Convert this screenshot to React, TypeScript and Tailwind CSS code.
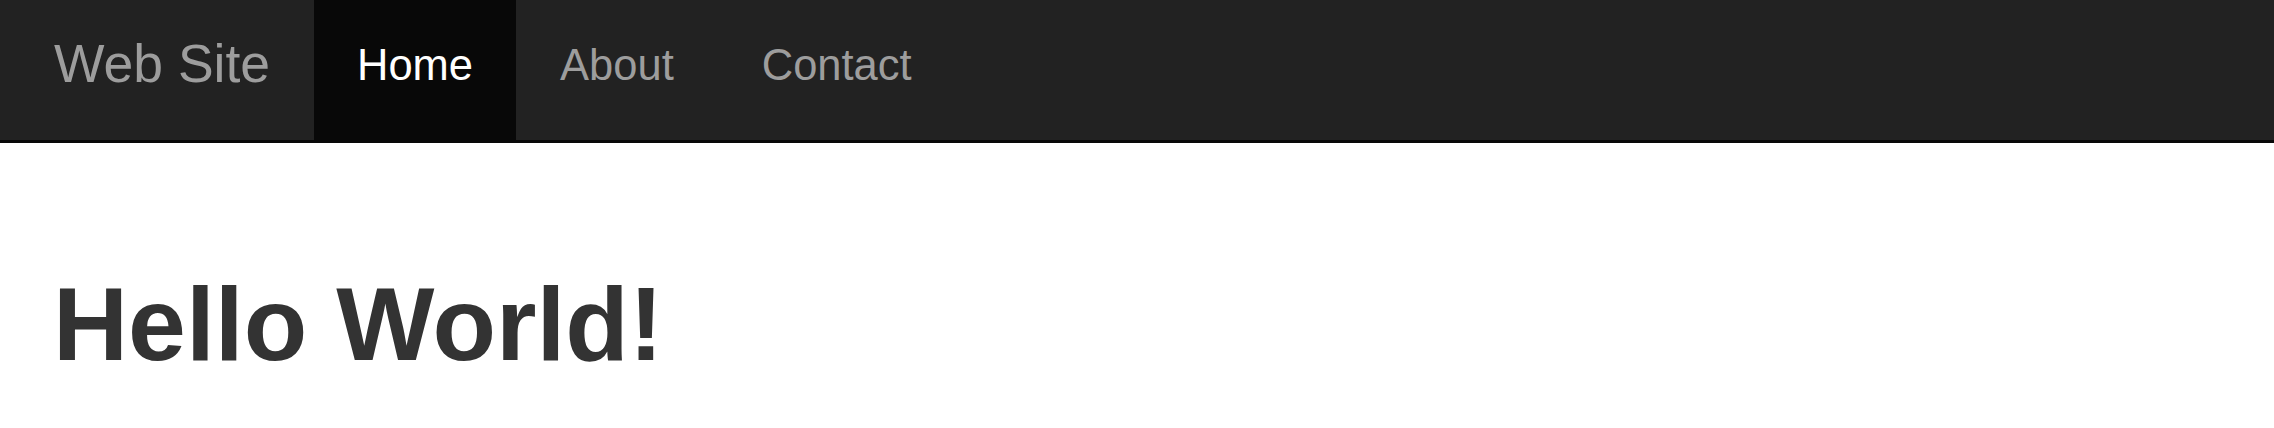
import React from "react";

export default function App() {
  const font = { fontFamily: '"Liberation Sans", Arial, Helvetica, sans-serif' };
  return (
    <div className="min-h-[428px] bg-white" style={font}>
      <nav className="h-[143px] bg-[#222222] border-b-[3px] border-[#080808] flex">
        <a className="w-[314px] h-[140px] pl-[54px] pt-[36px] text-[53.5px] leading-[56px] text-[#9d9d9d] whitespace-nowrap">
          Web Site
        </a>
        <ul className="flex">
          <li>
            <a className="block h-[140px] px-[43px] pt-[37px] text-[43.5px] leading-[56px] text-white bg-[#080808]">
              Home
            </a>
          </li>
          <li>
            <a className="block h-[140px] px-[44px] pt-[37px] text-[43.5px] leading-[56px] text-[#9d9d9d]">
              About
            </a>
          </li>
          <li>
            <a className="block h-[140px] px-[44px] pt-[37px] text-[43.5px] leading-[56px] text-[#9d9d9d]">
              Contact
            </a>
          </li>
        </ul>
      </nav>
      <main className="pl-[53px] pt-[126px]">
        <h1 className="text-[104px] leading-[110px] font-bold text-[#333333]">Hello World!</h1>
      </main>
    </div>
  );
}
